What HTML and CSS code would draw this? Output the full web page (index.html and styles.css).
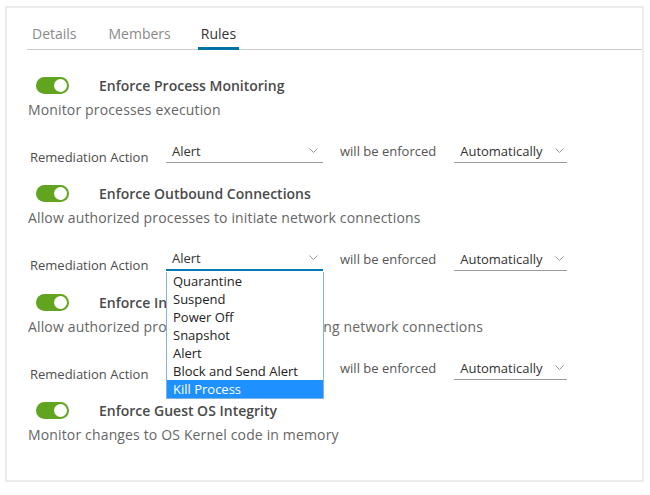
FILE: index.html
```html
<!DOCTYPE html>
<html lang="en">
<head>
<meta charset="utf-8">
<title>Rules</title>
<link rel="stylesheet" href="styles.css">
</head>
<body>
<div class="panel">
  <nav class="tabs">
    <span class="tab">Details</span>
    <span class="tab">Members</span>
    <span class="tab active">Rules</span>
  </nav>

  <section class="rule">
    <div class="rule-head"><span class="toggle"><span class="knob"></span></span><span class="rule-title">Enforce Process Monitoring</span></div>
    <p class="rule-desc">Monitor processes execution</p>
    <div class="action-row">
      <span class="action-label">Remediation Action</span>
      <div class="select sel-action"><span>Alert</span><svg class="chev" width="9" height="6" viewBox="0 0 9 6"><polyline points="0.5,0.5 4.5,4.5 8.5,0.5" fill="none" stroke="#9a9a9a" stroke-width="1"/></svg></div>
      <span class="enforced">will be enforced</span>
      <div class="select sel-mode"><span>Automatically</span><svg class="chev" width="9" height="6" viewBox="0 0 9 6"><polyline points="0.5,0.5 4.5,4.5 8.5,0.5" fill="none" stroke="#9a9a9a" stroke-width="1"/></svg></div>
    </div>
  </section>

  <section class="rule">
    <div class="rule-head"><span class="toggle"><span class="knob"></span></span><span class="rule-title">Enforce Outbound Connections</span></div>
    <p class="rule-desc">Allow authorized processes to initiate network connections</p>
    <div class="action-row">
      <span class="action-label">Remediation Action</span>
      <div class="select sel-action open"><span>Alert</span><svg class="chev" width="9" height="6" viewBox="0 0 9 6"><polyline points="0.5,0.5 4.5,4.5 8.5,0.5" fill="none" stroke="#9a9a9a" stroke-width="1"/></svg>
        <ul class="listbox">
          <li>Quarantine</li>
          <li>Suspend</li>
          <li>Power Off</li>
          <li>Snapshot</li>
          <li>Alert</li>
          <li>Block and Send Alert</li>
          <li class="selected">Kill Process</li>
        </ul>
      </div>
      <span class="enforced">will be enforced</span>
      <div class="select sel-mode"><span>Automatically</span><svg class="chev" width="9" height="6" viewBox="0 0 9 6"><polyline points="0.5,0.5 4.5,4.5 8.5,0.5" fill="none" stroke="#9a9a9a" stroke-width="1"/></svg></div>
    </div>
  </section>

  <section class="rule">
    <div class="rule-head"><span class="toggle"><span class="knob"></span></span><span class="rule-title">Enforce Inbound Connections</span></div>
    <p class="rule-desc">Allow authorized processes to accept incoming network connections</p>
    <div class="action-row">
      <span class="action-label">Remediation Action</span>
      <div class="select sel-action"><span>Alert</span><svg class="chev" width="9" height="6" viewBox="0 0 9 6"><polyline points="0.5,0.5 4.5,4.5 8.5,0.5" fill="none" stroke="#9a9a9a" stroke-width="1"/></svg></div>
      <span class="enforced">will be enforced</span>
      <div class="select sel-mode"><span>Automatically</span><svg class="chev" width="9" height="6" viewBox="0 0 9 6"><polyline points="0.5,0.5 4.5,4.5 8.5,0.5" fill="none" stroke="#9a9a9a" stroke-width="1"/></svg></div>
    </div>
  </section>

  <section class="rule">
    <div class="rule-head"><span class="toggle"><span class="knob"></span></span><span class="rule-title">Enforce Guest OS Integrity</span></div>
    <p class="rule-desc">Monitor changes to OS Kernel code in memory</p>
  </section>
</div>
</body>
</html>
```

FILE: styles.css
```css
* { box-sizing: border-box; }

body {
  margin: 0;
  background: #ffffff;
  font-family: "Open Sans", "Noto Sans", sans-serif;
  color: #4d4d4d;
}

.panel {
  margin: 6px 0 0 5px;
  width: 639px;
  height: 476px;
  border: 2px solid #ececec;
  background: #fff;
}

.tabs {
  display: flex;
  gap: 30px;
  margin: 16px 0 0 20px;
  padding-left: 4px;
  border-bottom: 1px solid #cccccc;
}

.tab {
  font-size: 14px;
  line-height: 20px;
  color: #8a8a8a;
  padding: 0 1px 3px;
  border-bottom: 3px solid transparent;
  margin-bottom: -1px;
}

.tab.active {
  color: #333;
  border-bottom-color: #0072a3;
  margin-left: -4px;
  padding: 0 3px 3px;
}

.rule {
  padding-left: 21px;
}

.rule:first-of-type { margin-top: 25px; }

.rule-head {
  display: flex;
  align-items: center;
  height: 20px;
  padding-left: 8px;
}

.toggle {
  width: 33px;
  height: 17px;
  border-radius: 9px;
  background: #60a420;
  display: flex;
  align-items: center;
  justify-content: flex-end;
  padding-right: 2px;
  flex: none;
}

.knob {
  width: 13px;
  height: 13px;
  border-radius: 50%;
  background: #fff;
}

.rule-title {
  margin-left: 30px;
  font-size: 14px;
  font-weight: 600;
  color: #4a4a4a;
  white-space: nowrap;
}

.rule-desc {
  margin: 5px 0 0;
  font-size: 14px;
  line-height: 20px;
  letter-spacing: 0.15px;
  color: #666;
  white-space: nowrap;
}

.action-row {
  display: flex;
  align-items: flex-start;
  margin-top: 19px;
  margin-bottom: 16px;
  height: 28px;
}

.rule:nth-of-type(2) .action-row { margin-bottom: 17px; }

.action-label {
  width: 138px;
  padding-left: 2px;
  margin-top: 8px;
  font-size: 13px;
  line-height: 20px;
  color: #4d4d4d;
  flex: none;
}

.select {
  position: relative;
  height: 24px;
  display: flex;
  align-items: center;
  justify-content: space-between;
  border-bottom: 1px solid #9a9a9a;
  padding: 0 5px 0 6px;
  font-size: 13px;
  color: #333;
  flex: none;
}

.sel-action { width: 157px; }
.sel-mode { width: 113px; padding-right: 3px; }

.select.open { border-bottom: 2px solid #0079b8; }

.enforced {
  margin: 0 18px 0 17px;
  font-size: 13px;
  line-height: 24px;
  color: #555;
  white-space: nowrap;
}

.listbox {
  position: absolute;
  left: 0;
  top: calc(100% + 3px);
  width: 158px;
  margin: 0;
  padding: 0;
  list-style: none;
  background: #fff;
  border: 1px solid #7fb3e0;
  border-top: none;
  z-index: 5;
}

.listbox li {
  height: 18px;
  line-height: 18px;
  padding-left: 6px;
  font-size: 13px;
  color: #222;
  white-space: nowrap;
}

.listbox li.selected {
  background: #1e90ff;
  color: #fff;
}
```
